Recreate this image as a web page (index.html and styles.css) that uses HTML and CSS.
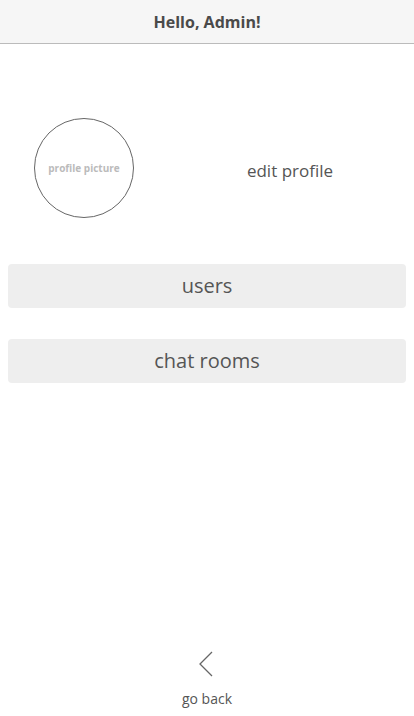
FILE: index.html
```html
<!DOCTYPE html>
<html>
<head>
<meta charset="utf-8">
<link rel="stylesheet" href="styles.css">
</head>
<body>
<div class="app">
  <header class="header">Hello, Admin!</header>
  <section class="profile">
    <div class="avatar">profile picture</div>
    <div class="edit">edit profile</div>
  </section>
  <nav class="menu">
    <div class="btn">users</div>
    <div class="btn">chat rooms</div>
  </nav>
  <footer class="back">
    <svg class="chev" width="14" height="26" viewBox="0 0 14 26"><path d="M13 1 L1 13 L13 25" fill="none" stroke="#666" stroke-width="1.3"/></svg>
    <div class="back-label">go back</div>
  </footer>
</div>
</body>
</html>
```
FILE: styles.css
```css
* { box-sizing: border-box; }
html, body { margin: 0; padding: 0; background: #fff; }
body { font-family: "Open Sans", sans-serif; color: #555; }
.app { height: 716px; display: flex; flex-direction: column; }
.header {
  height: 44px;
  background: #f6f6f6;
  border-bottom: 1px solid #bbb;
  display: flex; align-items: center; justify-content: center;
  font-weight: 700; font-size: 16px; color: #4a4a4a;
}
.profile {
  display: flex; align-items: center;
  margin-top: 74px;
  padding-left: 34px;
}
.avatar {
  width: 100px; height: 100px; border-radius: 50%;
  border: 1px solid #666;
  display: flex; align-items: center; justify-content: center;
  font-size: 10px; font-weight: 700; color: #bbb;
}
.edit { flex: 1; text-align: center; padding-left: 32px; font-size: 17px; color: #555; padding-top: 4px; }
.menu { display: flex; flex-direction: column; gap: 31px; padding: 0 8px; margin-top: 46px; }
.btn {
  height: 44px; background: #eee; border-radius: 4px;
  display: flex; align-items: center; justify-content: center;
  font-size: 20px; color: #555; padding-bottom: 2px;
}
.back { margin-top: auto; display: flex; flex-direction: column; align-items: center; padding-bottom: 8px; }
.chev { display: block; margin-bottom: 12px; margin-right: 2px; }
.back-label { font-size: 14px; color: #555; }
```
